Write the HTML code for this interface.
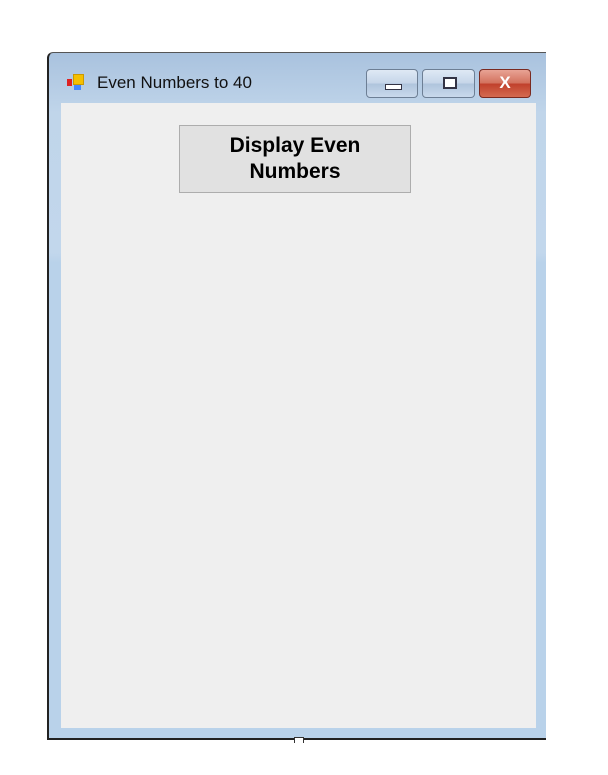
<html><head><style>
body{margin:0;width:608px;height:775px;background:#fff;position:relative;overflow:hidden;font-family:"Liberation Sans",sans-serif}
.win{position:absolute;left:47px;top:52px;width:499px;height:688px;background:linear-gradient(#a9c2de 0,#c0d5ea 60px,#c2d7ec 200px,#b9d2ea 210px,#b9d2ea 100%);border-left:2px solid #222;border-top:1px solid #555;border-top-left-radius:6px;border-bottom:2px solid #222;box-sizing:border-box}
.client{position:absolute;left:61px;top:103px;width:475px;height:625px;background:#efefef}
.title{position:absolute;left:97px;top:73px;color:#111;font-family:"Liberation Sans",sans-serif;font-size:17px}
.tb{position:absolute;top:69px;height:29px;border:1px solid #6d7f95;border-radius:4px;box-sizing:border-box;background:linear-gradient(#dfe9f5,#c5d5e8 50%,#afc4dc 51%,#c9d9ec)}
.btn{position:absolute;left:179px;top:125px;width:232px;height:68px;background:#e1e1e1;border:1px solid #adadad;box-sizing:border-box;text-align:center;font-weight:bold;font-size:21px;line-height:26px;padding-top:7px;color:#000}
</style></head><body>
<div class="win"></div>
<div class="client"></div>
<div style="position:absolute;left:67px;top:79px;width:5px;height:7px;background:#d22"></div>
<div style="position:absolute;left:73px;top:74px;width:9px;height:9px;background:#f5c000;border:1px solid #c90"></div>
<div style="position:absolute;left:74px;top:85px;width:7px;height:5px;background:#48f"></div>
<div class="title">Even Numbers to 40</div>
<div class="tb" style="left:366px;width:52px"><div style="position:absolute;left:18px;top:14px;width:15px;height:4px;border:1px solid #334;background:#fff"></div></div>
<div class="tb" style="left:422px;width:53px"><div style="position:absolute;left:20px;top:7px;width:10px;height:8px;border:2px solid #334;background:#fff"></div></div>
<div class="tb" style="left:479px;width:52px;border-color:#7a2a20;background:linear-gradient(#e8a395,#d2705c 50%,#c0402b 51%,#d46a50)"><div style="position:absolute;left:0;width:100%;top:3px;text-align:center;color:#fff;font-weight:bold;font-size:17px">X</div></div>
<div class="btn">Display Even<br>Numbers</div>
<div style="position:absolute;left:294px;top:737px;width:8px;height:5px;background:#fff;border:1px solid #333;border-bottom:none"></div>
</body></html>
